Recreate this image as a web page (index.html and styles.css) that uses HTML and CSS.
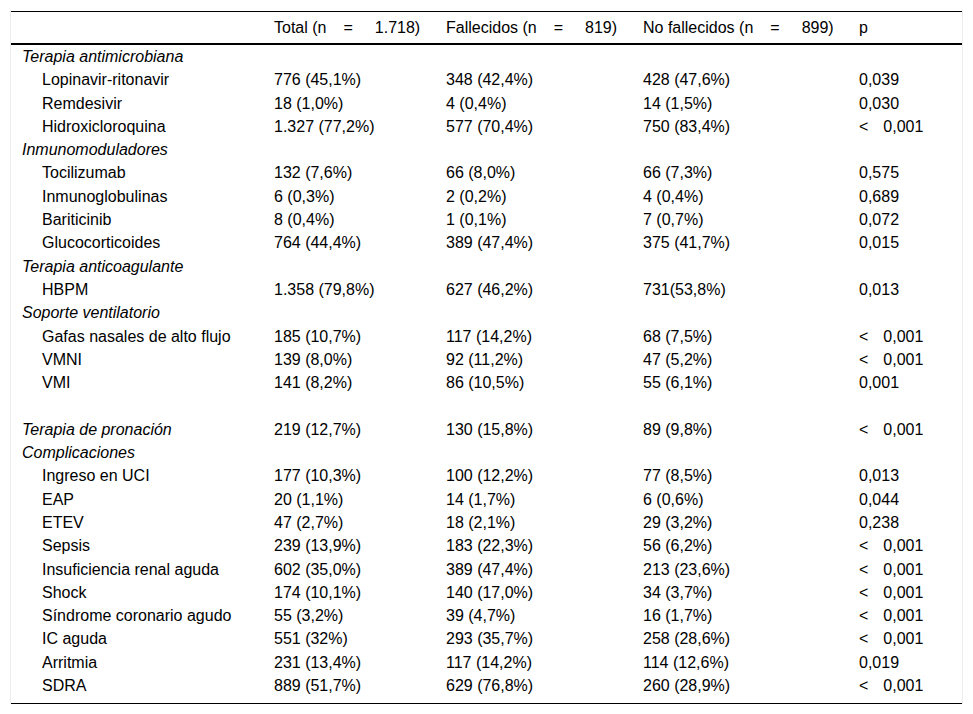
FILE: index.html
```html
<!DOCTYPE html>
<html lang="es">
<head>
<meta charset="utf-8">
<link rel="stylesheet" href="styles.css">
<title>Tabla</title>
</head>
<body>
<div class="wrap">
<table class="tbl">
<colgroup>
<col class="c1"><col class="c2"><col class="c3"><col class="c4"><col class="c5">
</colgroup>
<thead>
<tr>
<th></th>
<th>Total (n<span class="eq">=</span>1.718)</th>
<th>Fallecidos (n<span class="eq">=</span>819)</th>
<th>No fallecidos (n<span class="eq">=</span>899)</th>
<th>p</th>
</tr>
</thead>
<tbody>
<tr class="cat"><td>Terapia antimicrobiana</td><td></td><td></td><td></td><td></td></tr>
<tr><td class="sub">Lopinavir-ritonavir</td><td>776 (45,1%)</td><td>348 (42,4%)</td><td>428 (47,6%)</td><td>0,039</td></tr>
<tr><td class="sub">Remdesivir</td><td>18 (1,0%)</td><td>4 (0,4%)</td><td>14 (1,5%)</td><td>0,030</td></tr>
<tr><td class="sub">Hidroxicloroquina</td><td>1.327 (77,2%)</td><td>577 (70,4%)</td><td>750 (83,4%)</td><td><span class="lt">&lt;</span>0,001</td></tr>
<tr class="cat"><td>Inmunomoduladores</td><td></td><td></td><td></td><td></td></tr>
<tr><td class="sub">Tocilizumab</td><td>132 (7,6%)</td><td>66 (8,0%)</td><td>66 (7,3%)</td><td>0,575</td></tr>
<tr><td class="sub">Inmunoglobulinas</td><td>6 (0,3%)</td><td>2 (0,2%)</td><td>4 (0,4%)</td><td>0,689</td></tr>
<tr><td class="sub">Bariticinib</td><td>8 (0,4%)</td><td>1 (0,1%)</td><td>7 (0,7%)</td><td>0,072</td></tr>
<tr><td class="sub">Glucocorticoides</td><td>764 (44,4%)</td><td>389 (47,4%)</td><td>375 (41,7%)</td><td>0,015</td></tr>
<tr class="cat"><td>Terapia anticoagulante</td><td></td><td></td><td></td><td></td></tr>
<tr><td class="sub">HBPM</td><td>1.358 (79,8%)</td><td>627 (46,2%)</td><td>731(53,8%)</td><td>0,013</td></tr>
<tr class="cat"><td>Soporte ventilatorio</td><td></td><td></td><td></td><td></td></tr>
<tr><td class="sub">Gafas nasales de alto flujo</td><td>185 (10,7%)</td><td>117 (14,2%)</td><td>68 (7,5%)</td><td><span class="lt">&lt;</span>0,001</td></tr>
<tr><td class="sub">VMNI</td><td>139 (8,0%)</td><td>92 (11,2%)</td><td>47 (5,2%)</td><td><span class="lt">&lt;</span>0,001</td></tr>
<tr><td class="sub">VMI</td><td>141 (8,2%)</td><td>86 (10,5%)</td><td>55 (6,1%)</td><td>0,001</td></tr>
<tr><td>&nbsp;</td><td></td><td></td><td></td><td></td></tr>
<tr class="cat"><td>Terapia de pronación</td><td>219 (12,7%)</td><td>130 (15,8%)</td><td>89 (9,8%)</td><td><span class="lt">&lt;</span>0,001</td></tr>
<tr class="cat"><td>Complicaciones</td><td></td><td></td><td></td><td></td></tr>
<tr><td class="sub">Ingreso en UCI</td><td>177 (10,3%)</td><td>100 (12,2%)</td><td>77 (8,5%)</td><td>0,013</td></tr>
<tr><td class="sub">EAP</td><td>20 (1,1%)</td><td>14 (1,7%)</td><td>6 (0,6%)</td><td>0,044</td></tr>
<tr><td class="sub">ETEV</td><td>47 (2,7%)</td><td>18 (2,1%)</td><td>29 (3,2%)</td><td>0,238</td></tr>
<tr><td class="sub">Sepsis</td><td>239 (13,9%)</td><td>183 (22,3%)</td><td>56 (6,2%)</td><td><span class="lt">&lt;</span>0,001</td></tr>
<tr><td class="sub">Insuficiencia renal aguda</td><td>602 (35,0%)</td><td>389 (47,4%)</td><td>213 (23,6%)</td><td><span class="lt">&lt;</span>0,001</td></tr>
<tr><td class="sub">Shock</td><td>174 (10,1%)</td><td>140 (17,0%)</td><td>34 (3,7%)</td><td><span class="lt">&lt;</span>0,001</td></tr>
<tr><td class="sub">Síndrome coronario agudo</td><td>55 (3,2%)</td><td>39 (4,7%)</td><td>16 (1,7%)</td><td><span class="lt">&lt;</span>0,001</td></tr>
<tr><td class="sub">IC aguda</td><td>551 (32%)</td><td>293 (35,7%)</td><td>258 (28,6%)</td><td><span class="lt">&lt;</span>0,001</td></tr>
<tr><td class="sub">Arritmia</td><td>231 (13,4%)</td><td>117 (14,2%)</td><td>114 (12,6%)</td><td>0,019</td></tr>
<tr class="last"><td class="sub">SDRA</td><td>889 (51,7%)</td><td>629 (76,8%)</td><td>260 (28,9%)</td><td><span class="lt">&lt;</span>0,001</td></tr>
</tbody>
</table>
</div>
</body>
</html>
```

FILE: styles.css
```css
html, body {
  margin: 0;
  padding: 0;
  background: #fff;
}

body {
  font-family: "Liberation Sans", Arial, sans-serif;
  font-size: 16px;
  color: #000;
}

.wrap {
  margin: 10px 10px 0 10px;
  padding-top: 1px;
  border-left: 1px solid #ececec;
  border-right: 1px solid #ececec;
}

.tbl {
  width: 100%;
  border-collapse: collapse;
  table-layout: fixed;
}

.c1 { width: 252px; }
.c2 { width: 172px; }
.c3 { width: 197px; }
.c4 { width: 216px; }
.c5 { width: 114px; }

.tbl thead tr {
  border-top: 1px solid #000;
  border-bottom: 2px solid #000;
}

.tbl th {
  font-weight: normal;
  text-align: left;
  padding: 7px 11px 6px 11px;
  line-height: 18px;
  white-space: nowrap;
}

.tbl td {
  padding: 3px 11px 2px 11px;
  line-height: 18.3px;
  white-space: nowrap;
  vertical-align: middle;
}

.tbl .cat td:first-child {
  font-style: italic;
}

.tbl td.sub {
  padding-left: 31px;
}

.tbl tr.last {
  border-bottom: 1px solid #000;
}

.tbl tr.last td {
  padding-bottom: 8px;
}

.eq {
  margin: 0 22px 0 17px;
}

.lt {
  margin-right: 15px;
}
```
